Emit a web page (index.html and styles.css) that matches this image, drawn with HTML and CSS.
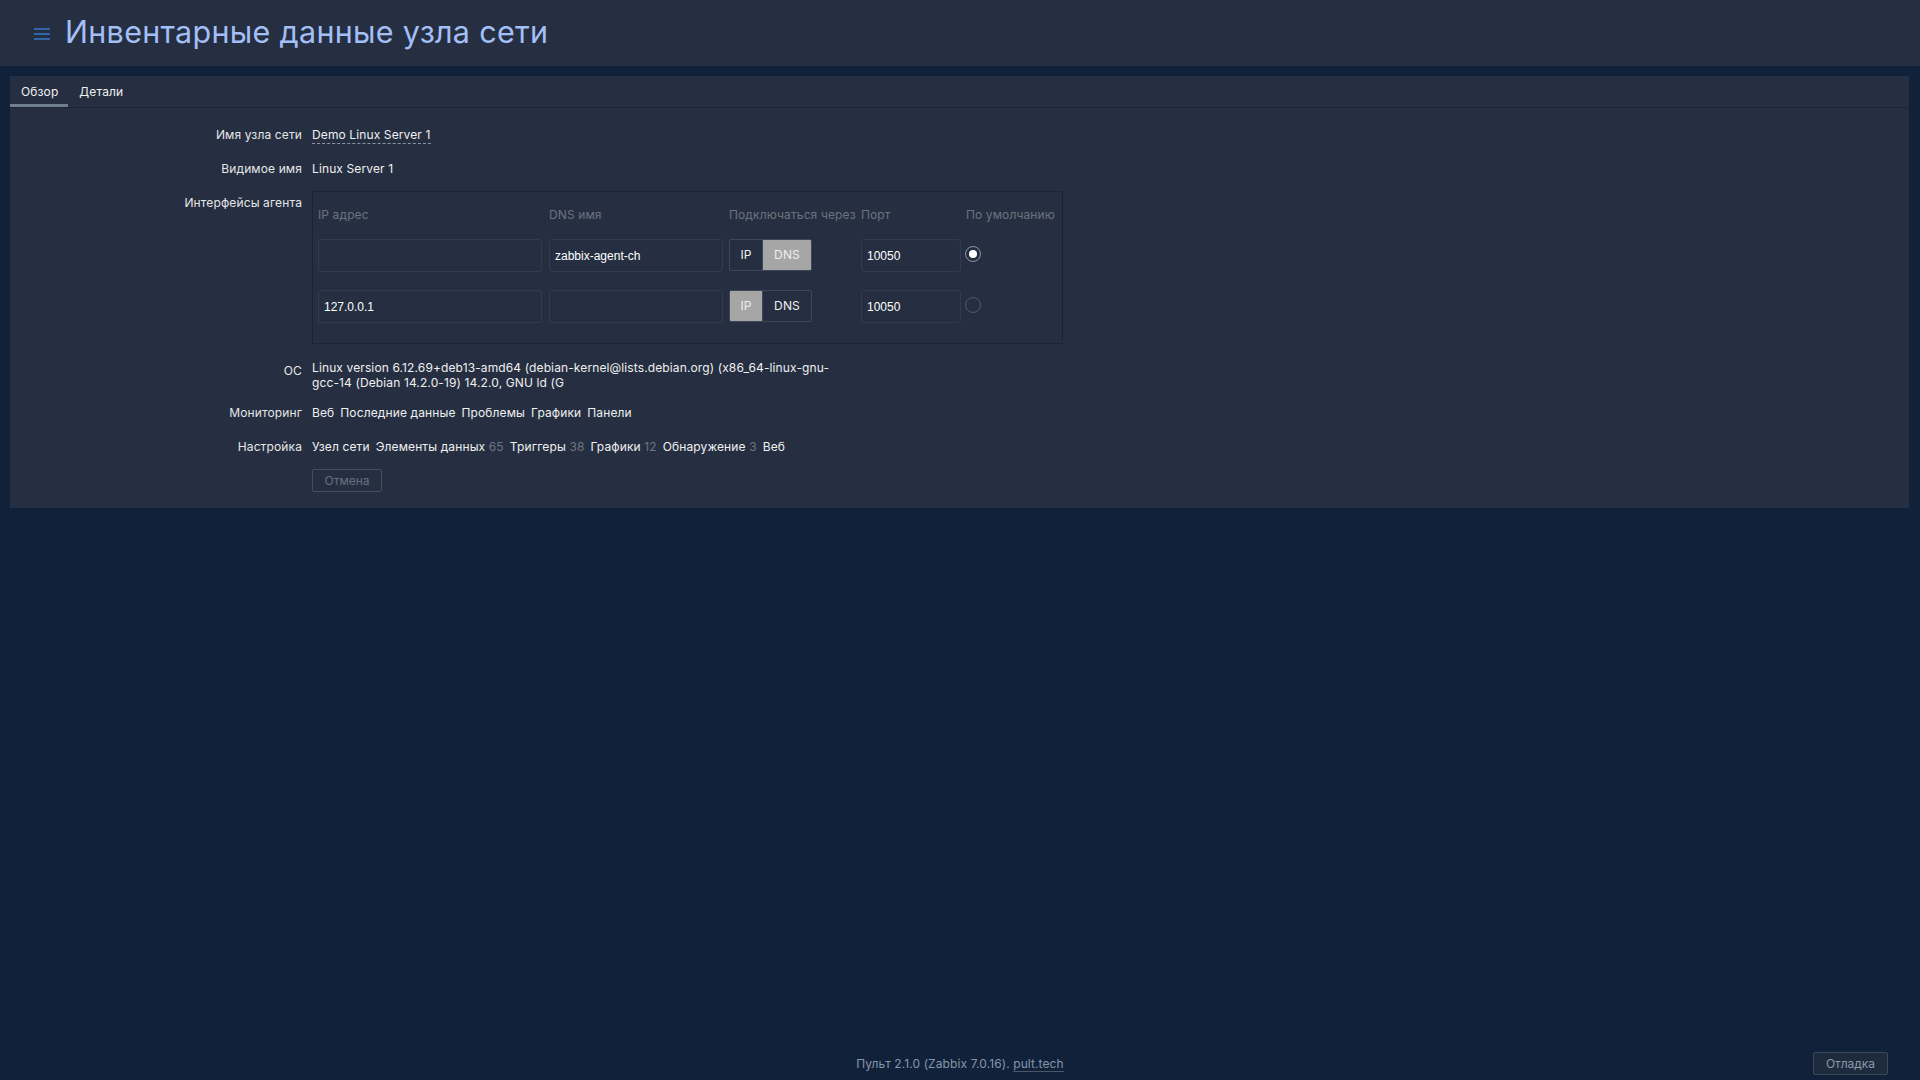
FILE: index.html
```html
<!DOCTYPE html>
<html lang="ru">

<head>
    <meta charset="UTF-8">
    <meta name="viewport" content="width=device-width, initial-scale=1.0">
    <title>Инвентарные данные узла сети</title>
    <link rel="stylesheet" href="styles.css">
</head>

<body>
    <div class="page">
        <header class="header">
            <button class="menu-btn" aria-label="Меню">
                <svg width="16" height="13" viewBox="0 0 16 13">
                    <rect x="0" y="1" width="16" height="2"/>
                    <rect x="0" y="6" width="16" height="2"/>
                    <rect x="0" y="11" width="16" height="2"/>
                </svg>
            </button>
            <h1>Инвентарные данные узла сети</h1>
        </header>

        <main class="panel">
            <nav class="tabs">
                <a class="tab active" href="#">Обзор</a>
                <a class="tab" href="#">Детали</a>
            </nav>

            <div class="form">
                <div class="label">Имя узла сети</div>
                <div class="value"><a class="link-dashed" href="#">Demo Linux Server 1</a></div>

                <div class="label">Видимое имя</div>
                <div class="value">Linux Server 1</div>

                <div class="label">Интерфейсы агента</div>
                <div class="value">
                    <div class="ifaces">
                        <div class="iface-head">IP адрес</div>
                        <div class="iface-head">DNS имя</div>
                        <div class="iface-head">Подключаться через</div>
                        <div class="iface-head">Порт</div>
                        <div class="iface-head">По умолчанию</div>

                        <div><input class="field f-ip" type="text" value="" readonly></div>
                        <div><input class="field f-dns" type="text" value="zabbix-agent-ch" readonly></div>
                        <div class="toggle"><span>IP</span><span class="on">DNS</span></div>
                        <div><input class="field f-port" type="text" value="10050" readonly></div>
                        <div><span class="radio checked"></span></div>

                        <div><input class="field f-ip" type="text" value="127.0.0.1" readonly></div>
                        <div><input class="field f-dns" type="text" value="" readonly></div>
                        <div class="toggle"><span class="on">IP</span><span>DNS</span></div>
                        <div><input class="field f-port" type="text" value="10050" readonly></div>
                        <div><span class="radio"></span></div>
                    </div>
                </div>

                <div class="label label-os">ОС</div>
                <div class="value value-os">Linux version 6.12.69+deb13-amd64 (debian-kernel@lists.debian.org) (x86_64-linux-gnu-<br>gcc-14 (Debian 14.2.0-19) 14.2.0, GNU ld (G</div>

                <div class="label">Мониторинг</div>
                <div class="value links">
                    <a href="#">Веб</a>
                    <a href="#">Последние данные</a>
                    <a href="#">Проблемы</a>
                    <a href="#">Графики</a>
                    <a href="#">Панели</a>
                </div>

                <div class="label">Настройка</div>
                <div class="value links">
                    <a href="#">Узел сети</a>
                    <span><a href="#">Элементы данных</a>&nbsp;<span class="count">65</span></span>
                    <span><a href="#">Триггеры</a>&nbsp;<span class="count">38</span></span>
                    <span><a href="#">Графики</a>&nbsp;<span class="count">12</span></span>
                    <span><a href="#">Обнаружение</a>&nbsp;<span class="count">3</span></span>
                    <a href="#">Веб</a>
                </div>

                <div class="label"></div>
                <div class="value"><button class="btn-cancel" disabled>Отмена</button></div>
            </div>
        </main>

        <footer class="footer">
            <div></div>
            <div class="copyright">Пульт 2.1.0 (Zabbix 7.0.16). <a href="#">pult.tech</a></div>
            <div class="footer-right"><button class="btn-debug">Отладка</button></div>
        </footer>
    </div>
</body>

</html>
```

FILE: styles.css
```css
* {
    box-sizing: border-box;
}

body {
    margin: 0;
    background-color: #11213a;
    color: #f0f0f0;
    font-family: Inter, "Noto Sans", sans-serif;
    font-size: 12px;
    letter-spacing: 0.12px;
}

a {
    color: #f0f0f0;
    text-decoration: none;
}

.page {
    min-height: 100vh;
    display: flex;
    flex-direction: column;
}

.header {
    height: 66px;
    background-color: #252f41;
    display: flex;
    align-items: center;
    padding-left: 34px;
    gap: 15px;
}

.menu-btn {
    background: none;
    border: none;
    padding: 0;
    fill: #2f65a6;
    display: flex;
}

.header h1 {
    margin: 0 0 4px 0;
    font-size: 30.5px;
    font-weight: 400;
    color: #a3bff6;
    letter-spacing: 0.3px;
}

.panel {
    margin: 10px 11px 0 10px;
    background-color: #252f41;
    padding-bottom: 16px;
}

.tabs {
    display: flex;
    height: 32px;
    border-bottom: 1px solid #1b2534;
}

.tab {
    padding: 2px 8px 0 11px;
    line-height: 27px;
    border-bottom: 3px solid transparent;
    color: #f0f0f0;
}

.tab.active {
    border-bottom-color: #6f7f8d;
    padding-right: 10px;
}

.form {
    display: grid;
    grid-template-columns: 292px 1fr;
    column-gap: 10px;
    row-gap: 10px;
    padding-top: 15px;
}

.label {
    text-align: right;
    line-height: 24px;
    color: #e6e6e6;
}

.value {
    line-height: 24px;
}

.link-dashed {
    border-bottom: 1px dashed #8a94a2;
    padding-bottom: 1px;
}

.ifaces {
    width: 751px;
    border: 1px solid #1a2434;
    padding: 11px 5px 20px 5px;
    display: grid;
    grid-template-columns: 231px 180px 132px 105px 1fr;
    row-gap: 0;
}

.iface-head {
    color: #6c7380;
    line-height: 24px;
    margin-bottom: 12px;
    white-space: nowrap;
}

.ifaces > div:nth-child(n+11) {
    margin-top: 18px;
}

.field {
    display: block;
    height: 33px;
    background-color: #252f41;
    border: 1px solid #333c4a;
    border-radius: 3px;
    color: #ffffff;
    font-family: "Liberation Sans", Arial, sans-serif;
    font-size: 12px;
    padding: 0 5px;
    outline: none;
}

.f-ip {
    width: 224px;
}

.f-dns {
    width: 174px;
}

.f-port {
    width: 100px;
}

.toggle {
    display: flex;
    width: 83px;
    height: 32px;
    border: 1px solid #3e4859;
    border-radius: 2px;
    overflow: hidden;
    align-self: start;
}

.toggle span {
    display: flex;
    align-items: center;
    justify-content: center;
    color: #f0f0f0;
}

.toggle span:first-child {
    width: 33px;
    border-right: 1px solid #3e4859;
}

.toggle span:last-child {
    flex: 1;
}

.toggle span.on {
    background-color: #a6a6a6;
    color: #efefef;
}

.radio {
    display: block;
    width: 16px;
    height: 16px;
    margin: 7px 0 0 -1px;
    border: 1px solid #4f5b6c;
    border-radius: 50%;
    position: relative;
}

.radio.checked {
    border-color: #8d96a3;
}

.radio.checked::after {
    content: "";
    position: absolute;
    left: 3px;
    top: 3px;
    width: 8px;
    height: 8px;
    border-radius: 50%;
    background-color: #ffffff;
}

.label-os {
    padding-top: 5px;
}

.value-os {
    line-height: 15px;
    padding: 6px 0 1px 0;
}

.links {
    display: flex;
    gap: 6px;
}

.count {
    color: #6c7686;
}

.btn-cancel {
    height: 23px;
    width: 70px;
    background-color: transparent;
    border: 1px solid #434e5e;
    border-radius: 2px;
    color: #66717f;
    font-family: inherit;
    font-size: 12px;
    display: block;
}

.footer {
    margin-top: auto;
    display: grid;
    grid-template-columns: 1fr auto 1fr;
    align-items: center;
    padding-bottom: 5px;
}

.copyright {
    color: #8696aa;
    font-size: 12px;
    letter-spacing: 0.1px;
}

.copyright a {
    color: #8696aa;
    border-bottom: 1px solid #4a5566;
}

.footer-right {
    display: flex;
    justify-content: flex-end;
    padding-right: 32px;
}

.btn-debug {
    height: 23px;
    width: 75px;
    background-color: #1e2b3e;
    border: 1px solid #3c495b;
    border-radius: 2px;
    color: #8c98a8;
    font-family: inherit;
    font-size: 12px;
}
```
